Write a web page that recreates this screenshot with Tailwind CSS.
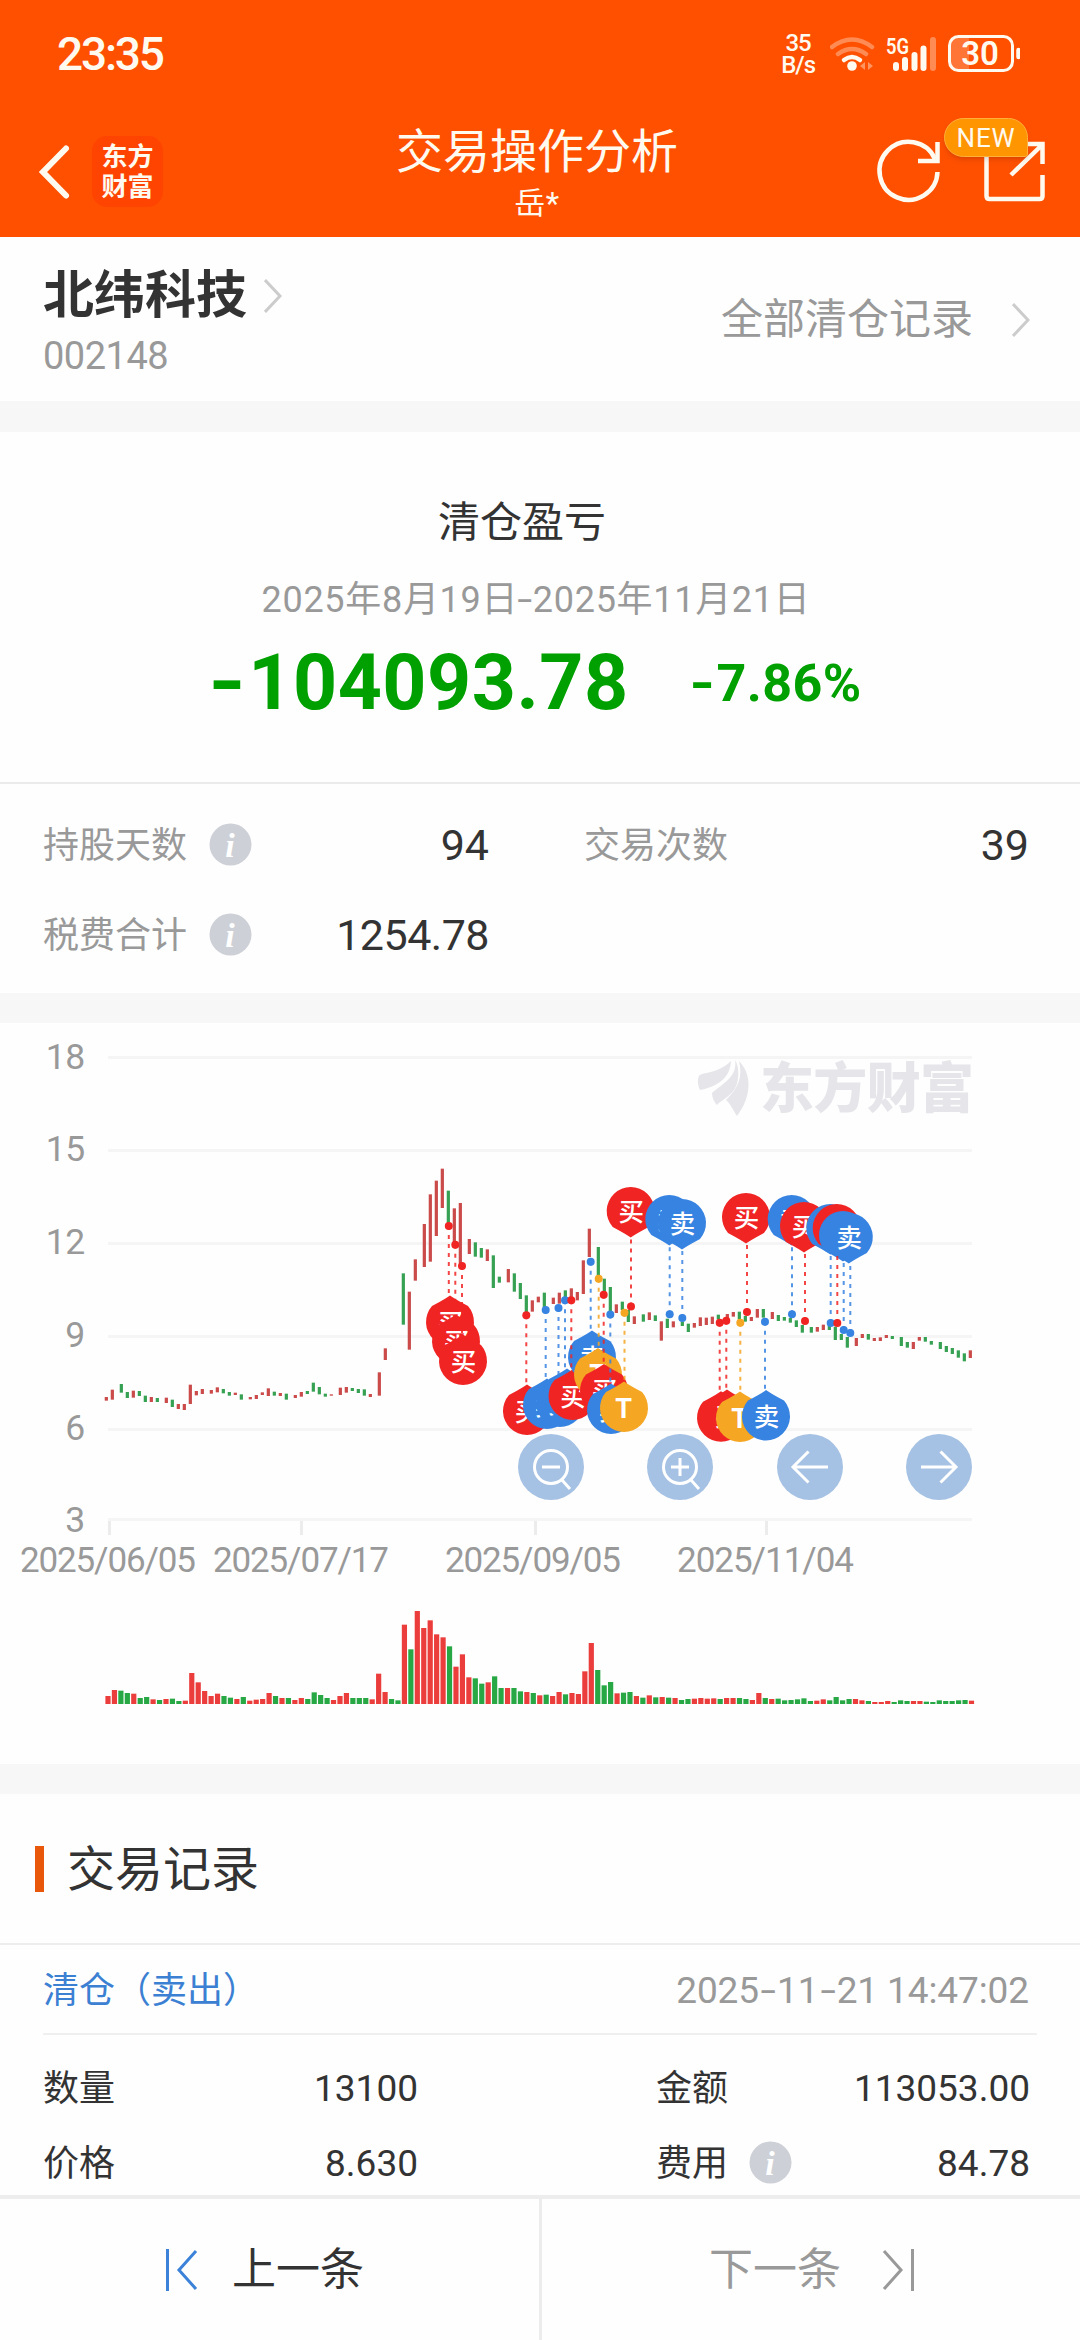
<!DOCTYPE html>
<html lang="zh-CN">
<head>
<meta charset="utf-8">
<title>交易操作分析</title>
<script src="https://cdn.jsdelivr.net/npm/@tailwindcss/browser@4"></script>
</head>
<body class="w-[1080px] h-[2340px] overflow-hidden bg-[#fefefe] text-[#333] leading-none flex flex-col [font-family:Roboto,'Noto_Sans_CJK_SC',sans-serif]">

<header class="h-[237px] shrink-0 bg-[#ff5000] text-[#fffaf0] flex flex-col">
  <div class="h-[107px] pl-[57px] pr-[60px] flex items-center justify-between">
    <span class="text-[46px] font-medium tracking-[-2.2px]">23:35</span>
    <div class="flex items-center">
      <div class="text-[24px] leading-[22px] font-medium text-center mr-[15px] tracking-[-1px]">35<br>B/s</div>
      <svg class="w-[190px] h-[40px]" viewBox="827 34 190 40" fill="none" stroke="#fffaf0" stroke-width="4.5" stroke-linecap="round">
        <path d="M829 47Q849 32 869 47M835 54Q849 44 863 54" stroke-opacity=".35"/>
        <path d="M841 60Q849 54 857 60"/>
        <circle cx="849" cy="66" r="4.8" fill="#fffaf0" stroke="none"/>
        <path d="M862 62v8l-5-4zM865 62v8l5-4z" fill="#fffaf0" fill-opacity=".4" stroke="none"/>
        <text x="883" y="53.500" font-size="22" font-weight="600" fill="#fffaf0" stroke="none" textLength="23" lengthAdjust="spacingAndGlyphs">5G</text>
        <path d="M893 65v3M902 60v8M911.500 55v13M920.500 48.500v19.500" stroke-width="6"/>
        <path d="M930 40v28" stroke-width="6" stroke-opacity=".35"/>
        <path d="M966 37h-10a9 9 0 0 0-9 9v15a9 9 0 0 0 9 9h10z" fill="#fffaf0" fill-opacity=".22" stroke="none"/>
        <rect x="946.500" y="36.500" width="63" height="34" rx="9" stroke-width="3"/>
        <path d="M1015.500 50v7" stroke-width="4.500"/>
        <text x="977" y="65" font-size="33" font-weight="600" fill="#fffaf0" stroke="none" text-anchor="middle">30</text>
      </svg>
    </div>
  </div>
  <div class="h-[130px] grid grid-cols-[300px_1fr_300px]">
    <div class="flex items-start pl-[38px] pt-[29px]">
      <svg class="w-[34px] h-[70px]" viewBox="0 0 34 70" fill="none" stroke="#fffaf0" stroke-width="6" stroke-linecap="round"><path d="M28 12.500L5 36L28 59.500"/></svg>
      <div class="ml-[20px] w-[71px] h-[71px] rounded-[15px] bg-[#ff4300] text-[26px] leading-[30px] font-bold text-center pt-[4px] [font-family:'Noto_Sans_CJK_SC',sans-serif]">东方<br>财富</div>
    </div>
    <div class="flex flex-col items-center pt-[21px] pr-[6px]">
      <h1 class="text-[47px] leading-[47px]">交易操作分析</h1>
      <p class="text-[31px] leading-[31px] mt-[13px] tracking-[0.5px]">岳*</p>
    </div>
    <div class="relative">
      <svg class="w-[300px] h-[130px]" viewBox="780 107 300 130" fill="none" stroke="#fffaf0" stroke-width="4.500">
        <path d="M937.500 172A29 29 0 1 1 935 159"/>
        <path d="M937.500 142v19h-19.500"/>
        <path d="M986.500 150v46q0 3 3 3h50q3 0 3-3v-21M1020 144h22.500v20M1042 145L1011 175"/>
      </svg>
      <span class="absolute left-[164px] top-[11px] w-[84px] h-[39px] rounded-[20px] rounded-br-[3px] border border-[#ffb03a] bg-[#ff9500] shadow-md text-[26px] leading-[38px] text-center tracking-[0.8px]">NEW</span>
    </div>
  </div>
</header>

<section class="h-[164px] shrink-0 px-[43px] flex justify-between">
  <div class="flex flex-col">
    <div class="flex items-center mt-[33px] h-[51px]">
      <h2 class="text-[51px] leading-[51px] font-bold">北纬科技</h2>
      <svg class="ml-[17px] w-[18px] h-[34px]" viewBox="0 0 18 34" fill="none" stroke="#ccc" stroke-width="3"><path d="M1 1L16 17L1 33"/></svg>
    </div>
    <span class="text-[38px] leading-[38px] text-[#999] mt-[16px] tracking-[-0.5px]">002148</span>
  </div>
  <div class="flex items-center pt-[2px] text-[42px] text-[#999]">全部清仓记录
    <svg class="ml-[39px] mr-[7px] w-[18px] h-[34px]" viewBox="0 0 18 34" fill="none" stroke="#ccc" stroke-width="3"><path d="M1 1L16 17L1 33"/></svg>
  </div>
</section>
<div class="h-[31px] shrink-0 bg-[#f7f7f7]"></div>

<section class="h-[350px] shrink-0 flex flex-col items-center">
  <h3 class="mt-[70px] text-[42px] leading-[42px] pr-[36px]">清仓盈亏</h3>
  <p class="mt-[38px] text-[36px] leading-[36px] text-[#999] tracking-[0.7px] pr-[8px]">2025年8月19日<span class="inline-block scale-x-150 px-[2px]">-</span>2025年11月21日</p>
  <div class="mt-[27px] ml-[-6px] flex items-center text-[#00a000] font-bold">
    <span class="text-[77px] leading-[77px] tracking-[0.5px]"><span class="inline-block scale-x-125 mr-[5px]">-</span>104093.78</span>
    <span class="ml-[63px] text-[52px] leading-[77px] tracking-[0.4px]"><span class="inline-block scale-x-125 mr-[4px]">-</span>7.86%</span>
  </div>
</section>

<section class="h-[211px] shrink-0 border-t-2 border-[#ebebeb] pl-[43px] pr-[51px] pt-[17px] grid grid-cols-[446px_1fr] auto-rows-[90px] gap-x-[95px] text-[36px]">
  <div class="flex items-center text-[#999]">持股天数
    <svg class="ml-[22px] mb-[4px] size-[43px]" viewBox="0 0 43 43"><circle cx="21.500" cy="21.500" r="21" fill="#cdd0d6"/><text x="21" y="34" font-size="34" font-style="italic" font-weight="bold" font-family="Liberation Serif" fill="#fff" text-anchor="middle">i</text></svg>
    <span class="ml-auto mb-[2px] text-[43px] text-[#333]">94</span>
  </div>
  <div class="flex items-center text-[#999]">交易次数<span class="ml-auto mb-[2px] text-[43px] text-[#333]">39</span></div>
  <div class="flex items-center text-[#999]">税费合计
    <svg class="ml-[22px] mb-[4px] size-[43px]" viewBox="0 0 43 43"><circle cx="21.500" cy="21.500" r="21" fill="#cdd0d6"/><text x="21" y="34" font-size="34" font-style="italic" font-weight="bold" font-family="Liberation Serif" fill="#fff" text-anchor="middle">i</text></svg>
    <span class="ml-auto mb-[2px] text-[43px] text-[#333] tracking-[-0.5px]">1254.78</span>
  </div>
</section>
<div class="h-[30px] shrink-0 bg-[#f7f7f7]"></div>

<section class="h-[741px] shrink-0">
  <svg id="chart" class="w-[1080px] h-[741px] block" viewBox="0 1023 1080 741">
    <g stroke="#f5f5f5" stroke-width="3">
      <path d="M108 1057.500H972M108 1150.500H972M108 1243.500H972M108 1336.500H972M108 1429.500H972M108 1519.500H972"/>
      <path d="M109.500 1521v14M301.500 1521v14M535.500 1521v14M766.500 1521v14" stroke="#ececec"/>
    </g>
    <g font-size="35.500" fill="#999" text-anchor="end" letter-spacing="-0.6">
      <text x="84.500" y="1069">18</text><text x="84.500" y="1161">15</text><text x="84.500" y="1254">12</text>
      <text x="84.500" y="1347">9</text><text x="84.500" y="1440">6</text><text x="84.500" y="1532">3</text>
    </g>
    <g font-size="35" fill="#999">
      <text x="20" y="1572" textLength="176">2025/06/05</text>
      <text x="213" y="1572" textLength="176">2025/07/17</text>
      <text x="445" y="1572" textLength="176">2025/09/05</text>
      <text x="677" y="1572" textLength="177">2025/11/04</text>
    </g>
    <g fill="#e6e5ea">
      <path d="M731 1061C718 1074 701 1072 699 1076C697 1080 698 1086 700 1090C715 1087 730 1080 731 1061Z"/>
      <path d="M735 1060C738 1077 722 1084 712 1093C712 1098 714 1102 717 1105C722 1099 733 1096 737 1084C739 1076 739 1066 735 1060Z"/>
      <path d="M739 1061C743 1078 738 1088 726 1100C730 1103 733 1110 737 1116C751 1098 753 1075 739 1061Z"/>
      <text x="760" y="1108" font-size="54" font-weight="900" font-family="Noto Sans CJK SC" textLength="214">东方财富</text>
    </g>
    <g id="candles"></g>
    <g id="volume"></g>
    <g id="pins"></g>
    <g fill="#a5c1e3"><circle cx="551" cy="1467" r="33"/><circle cx="680" cy="1467" r="33"/><circle cx="810" cy="1467" r="33"/><circle cx="939" cy="1467" r="33"/></g>
    <g fill="none" stroke="#fff" stroke-width="3">
      <circle cx="551" cy="1467" r="16.500"/><path d="M542 1467h18M562 1480l8 9"/>
      <circle cx="680" cy="1467" r="16.500"/><path d="M671 1467h18M680 1458v18M691 1480l8 9"/>
      <path d="M828 1467h-35M808.500 1451.500L793 1467l15.500 15.500M921 1467h35M940.500 1451.500L956 1467l-15.500 15.500"/>
    </g>
  </svg>
</section>
<div class="h-[30px] shrink-0 bg-[#f7f7f7]"></div>

<section class="h-[149px] shrink-0 pl-[35px] flex items-center">
  <span class="w-[9px] h-[46px] bg-[#e8570a]"></span>
  <h3 class="ml-[23px] pt-[2px] text-[48px] leading-[48px]">交易记录</h3>
</section>
<section class="h-[252px] shrink-0 border-t-2 border-[#ededed]">
  <div class="h-[90px] mx-[43px] pt-[3px] pr-[8px] border-b-2 border-[#efefef] flex items-center justify-between">
    <span class="text-[36px] text-[#3b80d2]">清仓（卖出）</span>
    <span class="text-[37px] text-[#999] tracking-[-0.1px]">2025<span class="inline-block scale-x-150 px-[4px]">-</span>11<span class="inline-block scale-x-150 px-[4px]">-</span>21 14:47:02</span>
  </div>
  <div class="pt-[16px] px-[43px] grid grid-cols-[375px_374px] auto-rows-[75px] gap-x-[238px] text-[36px]">
    <div class="flex items-center justify-between">数量<span class="text-[37px]">13100</span></div>
    <div class="flex items-center justify-between">金额<span class="text-[37px]">113053.00</span></div>
    <div class="flex items-center justify-between">价格<span class="text-[37px]">8.630</span></div>
    <div class="flex items-center">费用
      <svg class="ml-[21px] mb-[3px] size-[43px]" viewBox="0 0 43 43"><circle cx="21.500" cy="21.500" r="21" fill="#cdd0d6"/><text x="21" y="34" font-size="34" font-style="italic" font-weight="bold" font-family="Liberation Serif" fill="#fff" text-anchor="middle">i</text></svg>
      <span class="ml-auto text-[37px]">84.78</span></div>
  </div>
</section>

<footer class="h-[145px] shrink-0 border-t-4 border-[#ededed] grid grid-cols-[542px_1fr] text-[44px]">
  <div class="border-r-3 border-[#ececec] flex items-center pl-[165px]">
    <svg class="w-[34px] h-[42px]" viewBox="0 0 34 42" fill="none" stroke="#3b82d8" stroke-width="3"><path d="M2.500 0v42M31 2L14 21l17 19"/></svg>
    <span class="ml-[33px]">上一条</span>
  </div>
  <div class="flex items-center pl-[167px] text-[#999]">
    <span>下一条</span>
    <svg class="ml-[40px] w-[34px] h-[42px]" viewBox="0 0 34 42" fill="none" stroke="#999" stroke-width="3"><path d="M31.500 0v42M3 2l17 19L3 40"/></svg>
  </div>
</footer>

<script>
const NS = 'http://www.w3.org/2000/svg';
function add(parent, tag, attrs, text) {
  const el = document.createElementNS(NS, tag);
  for (const k in attrs) el.setAttribute(k, attrs[k]);
  if (text) el.textContent = text;
  parent.appendChild(el);
  return el;
}
const candles = document.getElementById('candles');
// Each segment has an origin; bars are "x top bottom colour" in thirds of a pixel.
const segments = [
  [90, 1130, '49 801 812 r;67 779 809 r;94 762 788 g;112 786 804 g;130 782 803 r;148 783 798 g;166 797 816 g;184 801 816 r;202 804 816 g;229 803 819 r;247 809 831 g;265 822 837 r;283 822 840 r;301 764 822 r;319 783 796 r;337 777 792 r;364 780 791 r;382 772 787 r;400 777 790 g;418 786 797 g;436 788 795 r;454 793 809 g;481 801 808 r;499 795 807 r;517 787 795 r;535 775 798 r;553 785 797 g;571 789 798 r;589 791 809 g;616 795 804 r;634 786 800 r;652 783 792 g;670 758 785 g;688 771 793 g;706 791 800 g;724 793 797 r;751 773 795 r;769 771 788 r;787 774 783 g;805 777 789 g;823 778 797 g;841 792 801 r;868 727 797 r;886 655 690 r'],
  [380, 1130, '70 430 584 g;88 485 659 r;106 388 452 r;133 282 411 r;151 193 395 r;169 152 318 r;187 116 234 r;205 182 280 g;223 235 340 r;241 219 400 r;268 327 372 r;286 337 380 g;304 354 383 g;322 358 393 r;340 376 474 g;358 440 458 g;385 417 457 r;403 430 485 g;421 459 507 g;439 496 550 g;457 511 545 r;475 500 517 r;493 488 532 g;520 503 522 r;538 488 521 r;556 481 515 g;574 475 510 r;592 486 511 r;610 391 492 r;628 296 381 r;655 351 440 g;673 446 490 g;691 471 545 g;709 523 549 r;727 515 540 g;745 540 576 g;763 559 582 r;790 553 575 g;808 547 570 r;826 556 573 g;844 574 632 r;862 566 594 g;880 574 592 r'],
  [640, 1030, '127 875 888 g;145 881 906 g;163 879 893 r;181 862 888 r;199 863 885 r;217 860 882 r;235 854 868 g;262 852 866 r;280 846 860 r;298 845 868 g;316 858 875 g;334 861 873 r;352 837 863 r;370 837 863 g;397 846 867 r;415 855 873 g;433 861 872 g;451 864 878 g;469 871 891 g;487 885 908 g;514 891 908 g;532 891 905 r;550 884 900 r;568 886 900 g;586 890 930 g;604 912 930 g;622 921 953 g;649 924 948 r;667 912 924 r;685 912 929 g;703 924 933 r;721 922 933 r;739 915 924 r;757 918 927 g;784 921 948 g;802 936 953 g;820 936 957 r;838 921 932 r;856 921 935 g;874 933 944 g;901 936 957 g;919 948 966 g;937 954 972 g;955 961 983 g;973 970 994 g;991 961 984 r']
];
for (const [ox, oy, data] of segments)
  for (const bar of data.split(';')) {
    const [x, t, b, c] = bar.split(' ');
    add(candles, 'rect', {x: ox + x / 3 - 1.6, y: oy + t / 3, width: 3.2, height: (b - t) / 3, fill: c === 'r' ? '#cb4a4a' : '#36a152'});
  }
const vols = 'r24 r42 g40 g33 r31 g18 g21 r14 g12 r15 g16 g9 r10 r93 r65 r39 r24 r31 g24 g19 r15 g21 r10 r13 r15 r33 g24 r18 g18 r12 r18 g15 g35 g27 g18 r12 r24 r33 g18 g18 g18 r14 r91 r36 g15 g11 r238 g164 r279 r228 r251 r209 r200 g173 r112 r149 r80 g77 g61 r65 g83 g48 r48 g48 g38 r36 g33 r26 g28 r24 r36 g29 r33 r30 r98 r183 g102 g56 g66 r32 g34 g36 r24 g19 r26 g20 r21 g19 r18 g12 g15 r16 r18 r16 r17 g15 r18 r18 g18 g15 r12 r33 g18 r15 g16 g11 g12 g14 g17 g9 r10 r14 g11 g21 g11 g15 r15 r11 g9 r6 r6 r9 g6 g11 g9 r9 r9 g7 g6 g11 g9 g9 g11 g12 r10'.split(' ');
const volume = document.getElementById('volume');
vols.forEach((v, i) => {
  const h = v.slice(1) / 3;
  add(volume, 'rect', {x: 108 + i * 6.444 - 2.6, y: 1704 - h, width: 5.2, height: h, fill: v[0] === 'r' ? '#ec3d3d' : '#27a844'});
});
const pins = document.getElementById('pins');
const types = {B: ['#f12424', '买'], S: ['#3783e1', '卖'], T: ['#f5a623', 'T']};
// type, dot x, dot y, head x, head y
const marks = [
  ['B',448.8,1226,450,1322],['B',455.3,1244.7,456,1341],['B',462,1266,463,1361],
  ['B',526.3,1315.3,527,1411],['S',545.7,1310,547,1405],['S',558.5,1308,560,1403],['S',565,1300.3,567,1395],['B',571.3,1300.3,572.5,1396],
  ['S',590.7,1261.7,592,1357],['T',598.7,1278.7,598,1374.5],['B',603.7,1294.7,604,1390.5],['S',610.3,1314.5,611,1410],['T',624.5,1312.7,624,1408],
  ['B',631,1306.5,630.7,1211],
  ['S',669.7,1314.3,669.3,1219],['S',682.3,1318,682,1223],
  ['B',719.7,1322.7,721,1417.7],['B',726.3,1320.7,727,1416],['T',740.3,1322.7,740,1418],['S',765,1321.7,766,1416.5],
  ['B',747,1312,746,1217],
  ['S',792,1314.3,791.7,1219],['B',805,1321,804,1226],['S',830.7,1323,830.3,1228],['B',837.3,1323,836.7,1228],['S',843.7,1330,843,1235],['S',850.3,1333,848.8,1237]
];
for (const [t, dx, dy, hx, hy] of marks) {
  const s = hy > dy ? -1 : 1, [c, label] = types[t];
  add(pins, 'path', {d: `M${hx} ${hy + s * 26.500}Q${hx - 3} ${hy + s * 24} ${hx - 18} ${hy + s * 15.900}A24 24 0 1 ${s > 0 ? 1 : 0} ${hx + 18} ${hy + s * 15.900}Q${hx + 3} ${hy + s * 24} ${hx} ${hy + s * 26.500}Z`, fill: c});
  add(pins, 'text', {x: hx + (t === 'T' ? -0.5 : 0.5), y: hy + 9.5, 'font-size': t === 'T' ? 27 : 25.5, 'font-weight': t === 'T' ? 700 : 500, 'text-anchor': 'middle', fill: '#fff'}, label);
}
for (const [t, dx, dy, hx, hy] of marks) {
  const s = hy > dy ? -1 : 1, c = types[t][0];
  add(pins, 'path', {d: `M${dx} ${dy}V${hy + s * 26}`, stroke: c, 'stroke-opacity': .85, 'stroke-width': 2, 'stroke-dasharray': '4 5', fill: 'none'});
  add(pins, 'circle', {cx: dx, cy: dy, r: 4, fill: c});
}
</script>
</body>
</html>
